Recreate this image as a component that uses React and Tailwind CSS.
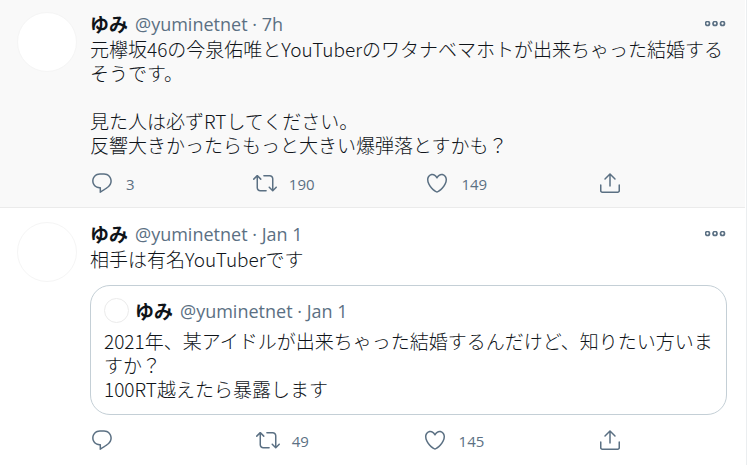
const ICONS = {
  reply: [
    'M14.046 2.242l-4.148-.01h-.002c-4.374 0-7.8 3.427-7.8 7.802 0 4.098 3.186 7.206 7.465 7.37v3.828c0 .108.044.286.12.403.142.225.384.347.632.347.138 0 .277-.038.402-.118.264-.168 6.473-4.14 8.088-5.506 1.902-1.61 3.04-3.97 3.043-6.312v-.017c-.006-4.367-3.43-7.787-7.8-7.788zm3.787 12.972c-1.134.96-4.862 3.405-6.772 4.643V16.67c0-.414-.335-.75-.75-.75h-.396c-3.66 0-6.318-2.476-6.318-5.886 0-3.534 2.768-6.302 6.3-6.302l4.147.01h.002c3.532 0 6.3 2.766 6.302 6.296-.003 1.91-.942 3.844-2.514 5.176z',
  ],
  retweet: [
    'M23.77 15.67c-.292-.293-.767-.293-1.06 0l-2.22 2.22V7.65c0-2.068-1.683-3.75-3.75-3.75h-5.85c-.414 0-.75.336-.75.75s.336.75.75.75h5.85c1.24 0 2.25 1.01 2.25 2.25v10.24l-2.22-2.22c-.293-.293-.768-.293-1.06 0s-.294.768 0 1.06l3.5 3.5c.145.147.337.22.53.22s.383-.072.53-.22l3.5-3.5c.294-.292.294-.767 0-1.06zm-10.66 3.28H7.26c-1.24 0-2.25-1.01-2.25-2.25V6.46l2.22 2.22c.148.147.34.22.532.22s.384-.073.53-.22c.293-.293.293-.768 0-1.06l-3.5-3.5c-.293-.294-.768-.294-1.06 0l-3.5 3.5c-.294.292-.294.767 0 1.06s.767.293 1.06 0l2.22-2.22V16.7c0 2.068 1.683 3.75 3.75 3.75h5.85c.414 0 .75-.336.75-.75s-.337-.75-.75-.75z',
  ],
  like: [
    'M12 21.638h-.014C9.403 21.59 1.95 14.856 1.95 8.478c0-3.064 2.525-5.754 5.403-5.754 2.29 0 3.83 1.58 4.646 2.73.814-1.148 2.354-2.73 4.645-2.73 2.88 0 5.404 2.69 5.404 5.755 0 6.376-7.454 13.11-10.037 13.157H12zM7.354 4.225c-2.08 0-3.903 1.988-3.903 4.255 0 5.74 7.034 11.596 8.55 11.658 1.518-.062 8.55-5.917 8.55-11.658 0-2.267-1.823-4.255-3.903-4.255-2.528 0-3.94 2.936-3.952 2.965-.23.562-1.156.562-1.387 0-.014-.03-1.425-2.965-3.954-2.965z',
  ],
  share: [
    'M17.53 7.47l-5-5c-.293-.293-.768-.293-1.06 0l-5 5c-.294.293-.294.768 0 1.06s.767.294 1.06 0l3.72-3.72V15c0 .414.336.75.75.75s.75-.336.75-.75V4.81l3.72 3.72c.146.147.338.22.53.22s.384-.072.53-.22c.293-.293.293-.767 0-1.06z',
    'M19.708 21.944H4.292C3.028 21.944 2 20.916 2 19.652V14c0-.414.336-.75.75-.75s.75.336.75.75v5.652c0 .437.355.792.792.792h15.416c.437 0 .792-.355.792-.792V14c0-.414.336-.75.75-.75s.75.336.75.75v5.652c0 1.264-1.028 2.292-2.292 2.292z',
  ],
};

function Action({ icon, label, count, wide }) {
  return (
    <button type="button" aria-label={label} className={`flex h-6 items-center gap-3 ${wide ? 'w-[52px]' : ''}`}>
      <svg viewBox="0 0 24 24" className="size-6 shrink-0 fill-current" aria-hidden="true">
        {ICONS[icon].map((d) => (
          <path key={d} d={d} />
        ))}
      </svg>
      {count && <span className="pt-0.5 text-[15px] leading-5">{count}</span>}
    </button>
  );
}

function Actions({ retweets, likes, replies }) {
  return (
    <div className="mt-[13px] flex max-w-[532px] justify-between text-[#5b7083]">
      <Action icon="reply" label="Reply" count={replies} wide />
      <Action icon="retweet" label="Retweet" count={retweets} />
      <Action icon="like" label="Like" count={likes} />
      <Action icon="share" label="Share" />
    </div>
  );
}

function Byline({ time }) {
  return (
    <div className="flex h-6 items-center gap-[7px] whitespace-nowrap leading-6">
      <a href="#profile" className="font-['Noto_Sans_CJK_JP',sans-serif] text-[19px] font-bold">ゆみ</a>
      <span className="text-[18px] text-[#5b7083]">@yuminetnet · {time}</span>
    </div>
  );
}

function Body({ children }) {
  return (
    <p className="whitespace-pre-line pb-px font-['Noto_Sans_CJK_JP',sans-serif] text-[19px] font-light leading-6">
      {children}
    </p>
  );
}

function MoreButton() {
  return (
    <button type="button" aria-label="More" className="flex h-6 items-center text-[#5b7083]">
      <svg viewBox="0 0 22 6" className="h-1.5 w-[22px] fill-none stroke-current" strokeWidth="1.7" aria-hidden="true">
        <circle cx="2.5" cy="2.5" r="2" />
        <circle cx="10" cy="2.5" r="2" />
        <circle cx="17.5" cy="2.5" r="2" />
      </svg>
    </button>
  );
}

function Tweet({ time, className, children, ...counts }) {
  return (
    <article className={`flex gap-[13px] pb-3 pl-[17px] pr-[18px] ${className}`}>
      <div className="size-[60px] shrink-0 rounded-full border border-[#f5f5f5] bg-white" />
      <div className="min-w-0 flex-1">
        <div className="mb-px flex justify-between">
          <Byline time={time} />
          <MoreButton />
        </div>
        {children}
        <Actions {...counts} />
      </div>
    </article>
  );
}

export default function App() {
  return (
    <main className="min-h-screen border-r border-[#ebeef0] bg-white pr-px font-['Open_Sans','Noto_Sans_CJK_JP',sans-serif] text-[#0f1419]">
      <Tweet time="7h" replies="3" retweets="190" likes="149" className="border-b border-[#ebebeb] bg-[#f9f9f9] pt-3">
        <Body>
          {'元欅坂46の今泉佑唯とYouTuberのワタナベマホトが出来ちゃった結婚する\nそうです。\n\n見た人は必ずRTしてください。\n反響大きかったらもっと大きい爆弾落とすかも？'}
        </Body>
      </Tweet>
      <Tweet time="Jan 1" retweets="49" likes="145" className="pt-3.5">
        <Body>相手は有名YouTuberです</Body>
        <div className="mt-[13px] rounded-[20px] border border-[#c4cfd6] py-3 pl-[13px] pr-1">
          <div className="mb-1.5 flex items-center gap-1.5">
            <div className="size-[25px] rounded-full border border-[#ebebeb]" />
            <Byline time="Jan 1" />
          </div>
          <Body>{'2021年、某アイドルが出来ちゃった結婚するんだけど、知りたい方いま\nすか？\n100RT越えたら暴露します'}</Body>
        </div>
      </Tweet>
    </main>
  );
}
